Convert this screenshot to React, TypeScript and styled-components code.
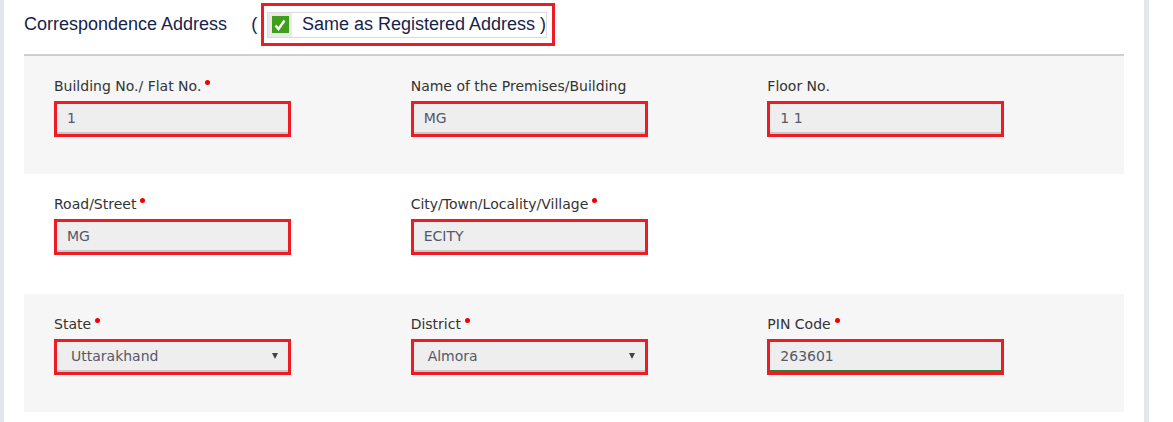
import React from "react";
import styled, { createGlobalStyle } from "styled-components";

const GlobalStyle = createGlobalStyle`
  html, body {
    margin: 0;
    padding: 0;
    background: #ffffff;
  }
  body {
    font-family: "DejaVu Sans", Verdana, sans-serif;
  }
`;

const Page = styled.div`
  display: flex;
  width: 1173px;
  height: 422px;
  overflow: hidden;
`;

const SideBar = styled.div<{ $w: number }>`
  width: ${(p) => p.$w}px;
  flex-shrink: 0;
  background: #e3e6ea;
`;

const Main = styled.div`
  width: 1100px;
  padding: 0 20px;
  flex-shrink: 0;
`;

const Header = styled.div`
  height: 54px;
  display: flex;
  align-items: center;
  border-bottom: 2px solid #cfcfcf;
  font-family: "Liberation Sans", Arial, sans-serif;
  font-size: 18px;
  color: #17234a;
`;

const Title = styled.span`
  margin-right: 24px;
  position: relative;
  top: -3px;
`;

const Paren = styled.span`
  position: relative;
  top: -3px;
`;

const Highlight = styled.div`
  margin-left: 4px;
  border: 3px solid #ed1c24;
  padding: 5px 3px 4px 3px;
  width: 282px;
  height: 28px;
  display: flex;
  align-items: center;
  position: relative;
  top: -3px;
`;

const CheckLabel = styled.label`
  display: flex;
  align-items: center;
  border: 1px solid #dcdcdc;
  height: 24px;
  width: 278px;
  white-space: nowrap;
`;

const CheckCell = styled.span`
  display: flex;
  align-items: center;
  justify-content: center;
  width: 24px;
  height: 24px;
  background: #e9e9e9;
  margin-right: 10px;
`;

const CheckBox = styled.span`
  width: 17px;
  height: 17px;
  background: #3f9e1c;
  display: flex;
  align-items: center;
  justify-content: center;
`;

const Section = styled.div<{ $shade: boolean }>`
  background: ${(p) => (p.$shade ? "#f6f6f6" : "#ffffff")};
  padding: 21px 15px ${(p) => (p.$shade ? 37 : 39)}px;
  display: grid;
  grid-template-columns: repeat(3, 1fr);
`;

const Field = styled.div`
  padding: 0 15px;
`;

const Label = styled.div`
  font-size: 14px;
  line-height: 18px;
  color: #333333;
  margin-bottom: 6px;
  white-space: nowrap;
`;

const Required = styled.span`
  display: inline-block;
  width: 5px;
  height: 5px;
  border-radius: 50%;
  background: #f00000;
  margin-left: 4px;
  vertical-align: top;
  margin-top: 3px;
`;

const Box = styled.div`
  width: 231px;
  height: 30px;
  border: 3px solid #ed1c24;
`;

const Input = styled.div<{ $pad: number; $ok?: boolean }>`
  height: 28px;
  background: #eeeeee;
  border-bottom: 2px solid ${(p) => (p.$ok ? "#2f7d32" : "#c8c8c8")};
  display: flex;
  align-items: center;
  justify-content: space-between;
  padding: 0 10px 0 ${(p) => p.$pad}px;
  font-size: 14px;
  color: #54586a;
`;

const Caret = styled.span`
  width: 0;
  height: 0;
  border-left: 3.5px solid transparent;
  border-right: 3.5px solid transparent;
  border-top: 6px solid #444;
`;

type FieldDef = {
  label: string;
  value: string;
  required?: boolean;
  select?: boolean;
  ok?: boolean;
};

const rows: (FieldDef | null)[][] = [
  [
    { label: "Building No./ Flat No.", value: "1", required: true },
    { label: "Name of the Premises/Building", value: "MG" },
    { label: "Floor No.", value: "1 1" },
  ],
  [
    { label: "Road/Street", value: "MG", required: true },
    { label: "City/Town/Locality/Village", value: "ECITY", required: true },
    null,
  ],
  [
    { label: "State", value: "Uttarakhand", required: true, select: true },
    { label: "District", value: "Almora", required: true, select: true },
    { label: "PIN Code", value: "263601", required: true, ok: true },
  ],
];

const App = () => {
  return (
    <Page>
      <GlobalStyle />
      <SideBar $w={4} />
      <Main>
        <Header>
          <Title>Correspondence Address</Title>
          <Paren>(</Paren>
          <Highlight>
            <CheckLabel>
              <CheckCell>
                <CheckBox>
                  <svg width="12" height="12" viewBox="0 0 12 12">
                    <path
                      d="M1.5 6.5 L4.5 10 L10.5 1.5"
                      fill="none"
                      stroke="#ffffff"
                      strokeWidth="2.4"
                    />
                  </svg>
                </CheckBox>
              </CheckCell>
              Same as Registered Address )
            </CheckLabel>
          </Highlight>
        </Header>
        {rows.map((row, i) => (
          <Section key={i} $shade={i % 2 === 0}>
            {row.map((f, j) =>
              f ? (
                <Field key={j}>
                  <Label>
                    {f.label}
                    {f.required && <Required />}
                  </Label>
                  <Box>
                    <Input $pad={f.select ? 14 : 10} $ok={f.ok}>
                      <span>{f.value}</span>
                      {f.select && <Caret />}
                    </Input>
                  </Box>
                </Field>
              ) : (
                <Field key={j} />
              )
            )}
          </Section>
        ))}
      </Main>
      <SideBar $w={5} />
    </Page>
  );
};

export default App;
